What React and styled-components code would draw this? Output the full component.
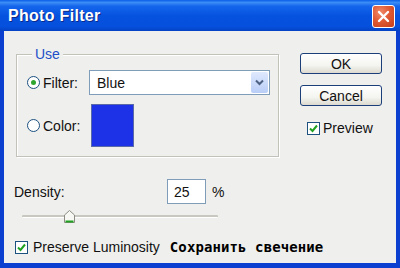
import React from "react";
import styled, { createGlobalStyle } from "styled-components";

const Global = createGlobalStyle`
  html, body { margin: 0; padding: 0; }
  body {
    width: 400px;
    height: 268px;
    overflow: hidden;
    font-family: "Liberation Sans", Arial, sans-serif;
  }
`;

const Window = styled.div`
  width: 400px;
  height: 268px;
  display: flex;
  flex-direction: column;
  background: #0a3fd0;
  box-sizing: border-box;
`;

const TitleBar = styled.div`
  height: 31px;
  flex: none;
  display: flex;
  align-items: center;
  justify-content: space-between;
  padding: 0 5px 0 8px;
  background: linear-gradient(
    to bottom,
    #0a5ee8 0%,
    #3b8cf5 8%,
    #1566ec 20%,
    #0653e0 50%,
    #0550dc 85%,
    #0442c4 100%
  );
`;

const Title = styled.span`
  color: #fff;
  font-weight: bold;
  font-size: 16px;
  letter-spacing: 0.3px;
  text-shadow: 1px 1px 0 #0a2a8a;
`;

const CloseButton = styled.div`
  width: 21px;
  height: 21px;
  border: 1px solid #fff;
  border-radius: 3px;
  background: radial-gradient(circle at 35% 30%, #f08a6a 0%, #e05a34 45%, #c43e1c 100%);
  display: flex;
  align-items: center;
  justify-content: center;
  margin-top: 1px;
`;

const Body = styled.div`
  flex: 1;
  margin: 0 4px 5px 4px;
  background: #efefed;
  padding: 22px 12px 0 10px;
  display: flex;
  flex-direction: column;
`;

const TopRow = styled.div`
  display: flex;
  align-items: flex-start;
`;

const Group = styled.div`
  position: relative;
  margin: 1px 0 0 2px;
  width: 263px;
  height: 103px;
  box-sizing: border-box;
  border: 1px solid #c2c1ba;
  box-shadow: inset 1px 1px 0 #fff, 1px 1px 0 #fff;
  padding: 15px 0 0 10px;
  display: flex;
  flex-direction: column;
  gap: 9px;
`;

const Legend = styled.span`
  position: absolute;
  top: -9px;
  left: 15px;
  background: #efefed;
  color: #1d50c8;
  font-size: 14px;
  line-height: 16px;
  padding: 0 3px;
`;

const OptionRow = styled.div`
  display: flex;
  align-items: center;
`;

const Radio = styled.span`
  width: 11px;
  height: 11px;
  border: 1px solid #1c5180;
  border-radius: 50%;
  background: #fff;
  display: flex;
  align-items: center;
  justify-content: center;
  flex: none;
  &::after {
    content: "";
    width: 5px;
    height: 5px;
    border-radius: 50%;
    background: ${(p) => (p.checked ? "#2fa52f" : "transparent")};
  }
`;

const Label = styled.span`
  font-size: 14px;
  line-height: 16px;
  color: #111;
  margin-left: ${(p) => (p.gap === undefined ? 3 : p.gap)}px;
  width: ${(p) => (p.w ? p.w + "px" : "auto")};
`;

const Select = styled.div`
  width: 181px;
  height: 25px;
  box-sizing: border-box;
  border: 1px solid #7f9db9;
  background: #fff;
  display: flex;
  align-items: center;
  justify-content: space-between;
  padding: 0 1px 0 7px;
  font-size: 14px;
  color: #111;
`;

const DropButton = styled.div`
  width: 17px;
  height: 21px;
  background: linear-gradient(to bottom, #dfe9fd, #b9cdf7);
  border-radius: 2px;
  display: flex;
  align-items: center;
  justify-content: center;
`;

const Swatch = styled.div`
  width: 43px;
  height: 43px;
  box-sizing: border-box;
  background: #1d32e6;
  border: 1px solid #5a6aa8;
`;

const Buttons = styled.div`
  display: flex;
  flex-direction: column;
  align-items: flex-start;
  margin-left: 21px;
  gap: 11px;
`;

const Button = styled.div`
  width: 82px;
  height: 21px;
  box-sizing: border-box;
  border: 1px solid #1c3f7a;
  border-radius: 3px;
  background: linear-gradient(to bottom, #ffffff 0%, #f4f4f0 60%, #dcdad0 100%);
  font-size: 14px;
  color: #111;
  display: flex;
  align-items: center;
  justify-content: center;
`;

const Check = styled.div`
  display: flex;
  align-items: center;
  margin-left: ${(p) => p.indent || 0}px;
  margin-top: ${(p) => p.top || 0}px;
`;

const CheckBox = styled.span`
  width: 11px;
  height: 11px;
  border: 1px solid #1c5180;
  background: #fff;
  display: flex;
  align-items: center;
  justify-content: center;
  flex: none;
`;

const DensityRow = styled.div`
  display: flex;
  align-items: center;
  margin-top: 22px;
`;

const NumberBox = styled.div`
  width: 39px;
  height: 25px;
  box-sizing: border-box;
  border: 1px solid #7f9db9;
  background: #fff;
  font-size: 14px;
  color: #111;
  display: flex;
  align-items: center;
  padding-left: 6px;
  margin-left: 99px;
`;

const Slider = styled.div`
  position: relative;
  width: 196px;
  height: 14px;
  margin-left: 8px;
  margin-top: 5px;
  display: flex;
  align-items: center;
`;

const Track = styled.div`
  width: 100%;
  height: 2px;
  background: #c8c7c0;
  border-bottom: 1px solid #fff;
  border-radius: 1px;
`;

const Thumb = styled.div`
  position: absolute;
  top: 0;
  left: ${(p) => p.pos}px;
  width: 11px;
  height: 13px;
`;

const BottomRow = styled.div`
  display: flex;
  align-items: center;
  margin-top: 16px;
  margin-left: 1px;
`;

const Russian = styled.span`
  font-family: "DejaVu Sans Mono", "Liberation Mono", monospace;
  font-weight: bold;
  font-size: 14px;
  color: #000;
  margin-left: 10px;
  letter-spacing: 0.1px;
`;

const Tick = () => (
  <svg width="9" height="9" viewBox="0 0 9 9">
    <path d="M1 4.5 L3.5 7 L8 1.5" fill="none" stroke="#21a121" strokeWidth="2" />
  </svg>
);

export default function App() {
  return (
    <>
      <Global />
      <Window>
        <TitleBar>
          <Title>Photo Filter</Title>
          <CloseButton>
            <svg width="13" height="13" viewBox="0 0 13 13">
              <path d="M2 2 L11 11 M11 2 L2 11" stroke="#fff" strokeWidth="2.4" strokeLinecap="round" />
            </svg>
          </CloseButton>
        </TitleBar>
        <Body>
          <TopRow>
            <Group>
              <Legend>Use</Legend>
              <OptionRow>
                <Radio checked />
                <Label w={46}>Filter:</Label>
                <Select>
                  Blue
                  <DropButton>
                    <svg width="9" height="7" viewBox="0 0 9 7">
                      <path d="M1 1.5 L4.5 5 L8 1.5" fill="none" stroke="#4d6185" strokeWidth="2" />
                    </svg>
                  </DropButton>
                </Select>
              </OptionRow>
              <OptionRow>
                <Radio />
                <Label w={48}>Color:</Label>
                <Swatch />
              </OptionRow>
            </Group>
            <Buttons>
              <Button>OK</Button>
              <Button>Cancel</Button>
              <Check indent={7} top={3}>
                <CheckBox>
                  <Tick />
                </CheckBox>
                <Label>Preview</Label>
              </Check>
            </Buttons>
          </TopRow>
          <DensityRow>
            <Label gap={0} w={54}>Density:</Label>
            <NumberBox>25</NumberBox>
            <Label gap={6}>%</Label>
          </DensityRow>
          <Slider>
            <Track />
            <Thumb pos={42}>
              <svg width="11" height="13" viewBox="0 0 11 13">
                <path d="M0.5 5 L5.5 0.5 L10.5 5 L10.5 12.5 L0.5 12.5 Z" fill="#f7f7f4" stroke="#8c8c84" />
                <path d="M1.5 11.5 L9.5 11.5" stroke="#21a121" strokeWidth="2" />
              </svg>
            </Thumb>
          </Slider>
          <BottomRow>
            <Check>
              <CheckBox>
                <Tick />
              </CheckBox>
              <Label gap={5}>Preserve Luminosity</Label>
            </Check>
            <Russian>Сохранить свечение</Russian>
          </BottomRow>
        </Body>
      </Window>
    </>
  );
}
